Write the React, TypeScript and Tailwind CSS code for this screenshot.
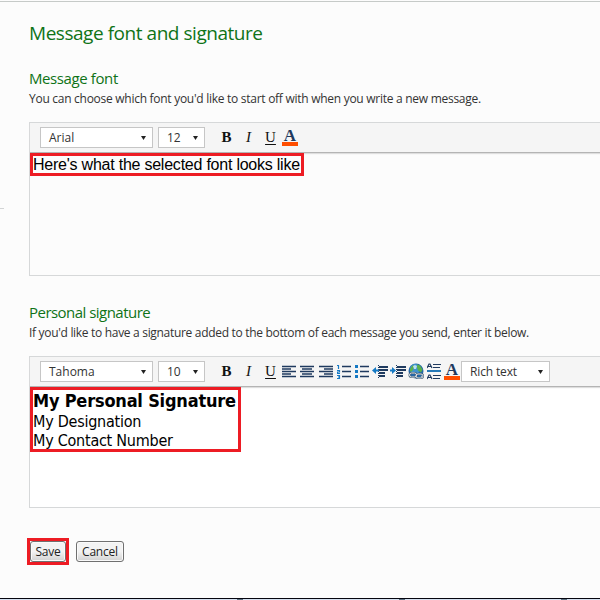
import { ReactNode } from 'react';

const UI_FONT = "font-['Open_Sans','Noto_Sans',sans-serif]";

function Select({ label, className }: { label: string; className: string }) {
  return (
    <button
      className={`flex h-[21px] shrink-0 items-center justify-between border border-[#c6c6c6] bg-white pl-2 pr-[6px] text-left text-[12px] leading-none text-[#333] ${className}`}
    >
      <span className="whitespace-nowrap">{label}</span>
      <svg width="5" height="4" viewBox="0 0 5 4" className="fill-[#222]">
        <path d="M0 0h5L2.5 4z" />
      </svg>
    </button>
  );
}

function FontColor() {
  return (
    <button className="flex h-[17px] w-4 shrink-0 flex-col items-center border-b-4 border-[#ff4e00] font-['Liberation_Serif',serif] text-[17px] font-bold leading-[14px] text-[#1f3a5f]">
      A
    </button>
  );
}

// font, size and the basic text styles, shared by both editors
function BaseTools({ font, size }: { font: string; size: string }) {
  return (
    <>
      <Select label={font} className="w-[113px]" />
      <Select label={size} className="ml-[5px] w-[47px]" />
      <div className="mb-[2px] ml-[16px] flex font-['Liberation_Serif',serif] text-[15px] leading-[18px] text-[#111]">
        <button className="w-[11px] font-bold">B</button>
        <button className="ml-[11px] w-[11px] italic">I</button>
        <button className="ml-[11px] w-[11px] underline underline-offset-2">U</button>
      </div>
    </>
  );
}

function Icon({ children, className = 'w-[14px]' }: { children: ReactNode; className?: string }) {
  return (
    <svg height="14" className={`shrink-0 ${className}`} stroke="#1f3a5f" strokeWidth="1.3" fill="none">
      {children}
    </svg>
  );
}

function ParagraphTools() {
  return (
    <div className="ml-[6px] flex items-center">
      <Icon>
        <path d="M0 1.5h14M0 4h9M0 6.5h14M0 9h9M0 11.5h14" />
      </Icon>
      <Icon className="ml-1 w-[14px]">
        <path d="M0 1.5h14M2 4h10M0 6.5h14M2 9h10M0 11.5h14" />
      </Icon>
      <Icon className="ml-[5px] w-[14px]">
        <path d="M0 1.5h14M5 4h9M0 6.5h14M5 9h9M0 11.5h14" />
      </Icon>
      <Icon className="ml-1 w-[14px]">
        <path d="M5 1.5h9M5 6.5h9M5 11.5h9" />
        <path
          d="M0 .5h1.5V4M0 5.5h2.5V7H.5v1.5H3M0 10.5h2.5v3H0M1 12h1.5"
          stroke="#1579c4"
          strokeWidth="1.2"
        />
      </Icon>
      <Icon className="ml-1 w-[14px]">
        <path d="M5 1.5h9M5 6.5h9M5 11.5h9" />
        <path d="M0 0h3v3H0zM0 5h3v3H0zM0 10h3v3H0z" fill="#1579c4" stroke="none" />
      </Icon>
      <Icon className="ml-[3px] w-[17px]">
        <path d="M7 2h9M7 5h9M7 8h6M7 11h6" strokeWidth="1.8" />
        <path d="M6.5 0v14" strokeDasharray="1 1" strokeWidth="1" />
        <path d="M0 5.5L4 2v2.500h3v2H4V9z" fill="#1579c4" stroke="none" />
      </Icon>
      <Icon className="ml-[1px] w-[17px]">
        <path d="M7 2h9M7 5h9M7 8h6M7 11h6" strokeWidth="1.8" />
        <path d="M6.5 0v14" strokeDasharray="1 1" strokeWidth="1" />
        <path d="M6 5.5L2 2v2.500H0v2h2V9z" fill="#1579c4" stroke="none" />
      </Icon>
      <svg width="17" height="17" viewBox="0 0 17 17" className="ml-[1px] shrink-0" fill="none">
        <circle cx="8" cy="8" r="7.5" fill="#2468a8" />
        <circle cx="7" cy="6" r="5" fill="#3f93cf" />
        <path d="M2 6l2-3 2-1v2L5 7l-2 2-1-1zM9 1.5l3 1 2.500 4-1.500 3-3-2-1-3z" fill="#5bb04a" />
        <path d="M5 3l2-1 2 1-1 3H6z" fill="#b9e0f2" />
        <rect x="1.5" y="10" width="7" height="4" rx="2" stroke="#3d566f" strokeWidth="2" />
        <rect x="8" y="11" width="7" height="4" rx="2" stroke="#3d566f" strokeWidth="2" />
        <rect x="1.5" y="10" width="7" height="4" rx="2" stroke="#dce6ed" />
        <rect x="8" y="11" width="7" height="4" rx="2" stroke="#dce6ed" />
      </svg>
      <svg width="14" height="17" viewBox="0 0 14 17" className="ml-[2px] shrink-0" fill="none">
        <path d="M0 8h14" stroke="#2378b8" strokeWidth="2" />
        <path
          d="M6 1.5h8M6 4.5h7M6 12.5h8M6 15.5h7M0 5L2 1h1l2 4M1 3.5h3M0 16l2-4h1l2 4M1 14.5h3"
          stroke="#1f3a5f"
          strokeWidth="1.2"
        />
      </svg>
      <div className="ml-[3px]">
        <FontColor />
      </div>
      <Select label="Rich text" className="ml-[1px] w-[89px] tracking-[-0.15px]" />
    </div>
  );
}

function Editor({ toolbar, children, className }: { toolbar: ReactNode; children: ReactNode; className: string }) {
  return (
    <div className={`border border-r-0 border-[#d6d8d9] ${className}`}>
      <div className="flex h-[30px] items-center border-b border-[#b4b4b4] bg-[#f5f5f5] pl-[10px] shadow-[0_1px_1px_#dedede]">
        {toolbar}
      </div>
      {children}
    </div>
  );
}

export default function App() {
  return (
    <div className={`flex h-[600px] w-[600px] flex-col overflow-hidden bg-[#fcfcfc] ${UI_FONT}`}>
      <div className="mt-px h-px w-full shrink-0 bg-[#c6cac8]" />
      <div className="flex flex-1">
        <div className="mt-[206px] h-px w-1 bg-[#d2d4d5]" />
        <main className="ml-[25px] flex flex-1 flex-col items-stretch">
          <h1 className="mt-[17px] h-[28px] whitespace-nowrap text-[19px] leading-[28px] tracking-[-0.46px] text-[#0f7317]">
            Message font and signature
          </h1>

          <h2 className="mt-[20px] h-[22px] text-[15px] leading-[22px] tracking-[-0.4px] text-[#0f7317]">
            Message font
          </h2>
          <p className="mt-px h-[18px] whitespace-nowrap text-[12px] leading-[18px] tracking-[-0.275px] text-[#333]">
            You can choose which font you'd like to start off with when you write a new message.
          </p>
          <Editor
            className="mt-[14px] h-[154px]"
            toolbar={
              <>
                <BaseTools font="Arial" size="12" />
                <div className="ml-[6px]">
                  <FontColor />
                </div>
              </>
            }
          >
            <div className="relative h-[23px] w-[274px] border-[3px] border-[#ed1c24] font-['Liberation_Sans',sans-serif] text-[16px] leading-[17px] tracking-[-0.23px] text-black">
              <span className="whitespace-nowrap">Here's what the selected font looks like</span>
            </div>
          </Editor>

          <h2 className="mt-[25px] h-[22px] text-[15px] leading-[22px] tracking-[-0.53px] text-[#0f7317]">
            Personal signature
          </h2>
          <p className="mt-px h-[18px] whitespace-nowrap text-[12px] leading-[18px] tracking-[-0.31px] text-[#333]">
            If you'd like to have a signature added to the bottom of each message you send, enter it below.
          </p>
          <Editor
            className="mt-[14px] h-[152px] bg-white"
            toolbar={
              <>
                <BaseTools font="Tahoma" size="10" />
                <ParagraphTools />
              </>
            }
          >
            <div className="relative h-[65px] w-[211px] whitespace-nowrap border-[3px] border-[#ed1c24] font-['DejaVu_Sans_Condensed','DejaVu_Sans',sans-serif] text-[16px] leading-[19px] tracking-[-0.25px] text-black">
              <p className="mb-px text-[18px] font-bold leading-[21px] tracking-[-0.2px]">My Personal Signature</p>
              <p>My Designation</p>
              <p>My Contact Number</p>
            </div>
          </Editor>

          <div className="mt-[30px] -ml-[2px] flex items-center">
            <div className="border-[3px] border-[#ed1c24]">
              <button className="block h-[21px] w-[36px] rounded-[3px] border border-[#707070] bg-linear-to-b from-[#f3f3f3] from-50% to-[#d2d2d2] text-[12px] leading-[19px] tracking-[-0.2px] text-[#222] shadow-[inset_0_0_0_1px_#fafafa]">
                Save
              </button>
            </div>
            <button className="ml-[7px] h-[21px] w-[48px] rounded-[3px] border border-[#707070] bg-linear-to-b from-[#f3f3f3] from-50% to-[#d2d2d2] text-[12px] leading-[19px] tracking-[-0.2px] text-[#222] shadow-[inset_0_0_0_1px_#fafafa]">
              Cancel
            </button>
          </div>
        </main>
      </div>
      <div className="h-px shrink-0 bg-[#05050f]" />
      <div className="flex h-px shrink-0 bg-[#d5e0f0]">
        <div className="ml-[237px] h-px w-[6px] bg-[#5d7080]" />
        <div className="ml-[156px] h-px w-[6px] bg-[#5d7080]" />
        <div className="ml-[156px] h-px w-[6px] bg-[#5d7080]" />
      </div>
    </div>
  );
}
